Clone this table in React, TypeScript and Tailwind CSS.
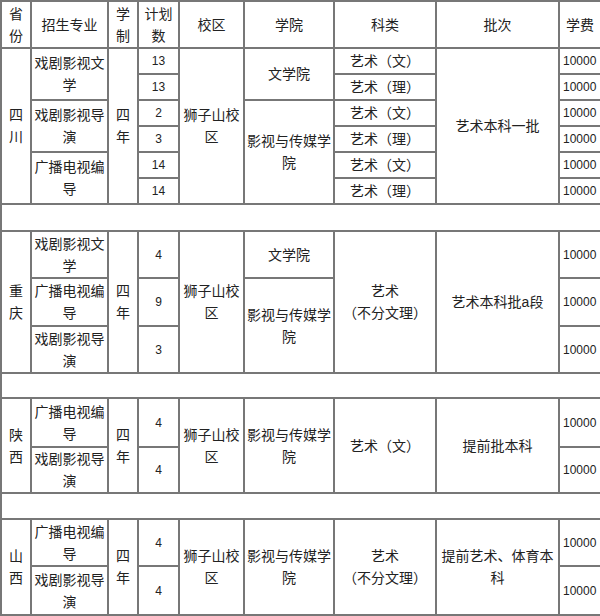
const cell = 'border-2 border-[#777] p-0 text-center align-middle whitespace-nowrap'
const num = `${cell} text-[12px]`
const fee = `${cell} text-[12px] text-left pl-[3px]`

function Blank({ h }: { h: string }) {
  return (
    <tr className={h}>
      <td colSpan={9} className={cell}></td>
    </tr>
  )
}

export default function App() {
  return (
    <div className="w-[600px] h-[616px] bg-white overflow-hidden">
      <table className="w-[600px] table-fixed border-collapse font-['Liberation_Sans','Noto_Sans_CJK_SC',sans-serif] text-[14px] leading-[22px] text-[#222]">
        <colgroup>
          <col className="w-[30px]" />
          <col className="w-[77px]" />
          <col className="w-[30px]" />
          <col className="w-[41px]" />
          <col className="w-[65px]" />
          <col className="w-[90px]" />
          <col className="w-[102px]" />
          <col className="w-[123px]" />
          <col className="w-[42px]" />
        </colgroup>
        <tbody>
          <tr className="h-[47px]">
            <td className={cell}>省<br />份</td>
            <td className={cell}>招生专业</td>
            <td className={cell}>学<br />制</td>
            <td className={cell}>计划<br />数</td>
            <td className={cell}>校区</td>
            <td className={cell}>学院</td>
            <td className={cell}>科类</td>
            <td className={cell}>批次</td>
            <td className={cell}>学费</td>
          </tr>

          {/* 四川 */}
          <tr className="h-[26px]">
            <td rowSpan={6} className={cell}>四<br />川</td>
            <td rowSpan={2} className={cell}>戏剧影视文<br />学</td>
            <td rowSpan={6} className={cell}>四<br />年</td>
            <td className={num}>13</td>
            <td rowSpan={6} className={cell}>狮子山校<br />区</td>
            <td rowSpan={2} className={cell}>文学院</td>
            <td className={cell}>艺术（文）</td>
            <td rowSpan={6} className={cell}>艺术本科一批</td>
            <td className={fee}>10000</td>
          </tr>
          <tr className="h-[26px]">
            <td className={num}>13</td>
            <td className={cell}>艺术（理）</td>
            <td className={fee}>10000</td>
          </tr>
          <tr className="h-[26px]">
            <td rowSpan={2} className={cell}>戏剧影视导<br />演</td>
            <td className={num}>2</td>
            <td rowSpan={4} className={cell}>影视与传媒学<br />院</td>
            <td className={cell}>艺术（文）</td>
            <td className={fee}>10000</td>
          </tr>
          <tr className="h-[26px]">
            <td className={num}>3</td>
            <td className={cell}>艺术（理）</td>
            <td className={fee}>10000</td>
          </tr>
          <tr className="h-[26px]">
            <td rowSpan={2} className={cell}>广播电视编<br />导</td>
            <td className={num}>14</td>
            <td className={cell}>艺术（文）</td>
            <td className={fee}>10000</td>
          </tr>
          <tr className="h-[26px]">
            <td className={num}>14</td>
            <td className={cell}>艺术（理）</td>
            <td className={fee}>10000</td>
          </tr>

          <Blank h="h-[27px]" />

          {/* 重庆 */}
          <tr className="h-[47px]">
            <td rowSpan={3} className={cell}>重<br />庆</td>
            <td className={cell}>戏剧影视文<br />学</td>
            <td rowSpan={3} className={cell}>四<br />年</td>
            <td className={num}>4</td>
            <td rowSpan={3} className={cell}>狮子山校<br />区</td>
            <td className={cell}>文学院</td>
            <td rowSpan={3} className={cell}>艺术<br />（不分文理）</td>
            <td rowSpan={3} className={cell}>艺术本科批a段</td>
            <td className={fee}>10000</td>
          </tr>
          <tr className="h-[48px]">
            <td className={cell}>广播电视编<br />导</td>
            <td className={num}>9</td>
            <td rowSpan={2} className={cell}>影视与传媒学<br />院</td>
            <td className={fee}>10000</td>
          </tr>
          <tr className="h-[47px]">
            <td className={cell}>戏剧影视导<br />演</td>
            <td className={num}>3</td>
            <td className={fee}>10000</td>
          </tr>

          <Blank h="h-[25px]" />

          {/* 陕西 */}
          <tr className="h-[49px]">
            <td rowSpan={2} className={cell}>陕<br />西</td>
            <td className={cell}>广播电视编<br />导</td>
            <td rowSpan={2} className={cell}>四<br />年</td>
            <td className={num}>4</td>
            <td rowSpan={2} className={cell}>狮子山校<br />区</td>
            <td rowSpan={2} className={cell}>影视与传媒学<br />院</td>
            <td rowSpan={2} className={cell}>艺术（文）</td>
            <td rowSpan={2} className={cell}>提前批本科</td>
            <td className={fee}>10000</td>
          </tr>
          <tr className="h-[46px]">
            <td className={cell}>戏剧影视导<br />演</td>
            <td className={num}>4</td>
            <td className={fee}>10000</td>
          </tr>

          <Blank h="h-[26px]" />

          {/* 山西 */}
          <tr className="h-[47px]">
            <td rowSpan={2} className={cell}>山<br />西</td>
            <td className={cell}>广播电视编<br />导</td>
            <td rowSpan={2} className={cell}>四<br />年</td>
            <td className={num}>4</td>
            <td rowSpan={2} className={cell}>狮子山校<br />区</td>
            <td rowSpan={2} className={cell}>影视与传媒学<br />院</td>
            <td rowSpan={2} className={cell}>艺术<br />（不分文理）</td>
            <td rowSpan={2} className={cell}>提前艺术、体育本<br />科</td>
            <td className={fee}>10000</td>
          </tr>
          <tr className="h-[49px]">
            <td className={cell}>戏剧影视导<br />演</td>
            <td className={num}>4</td>
            <td className={fee}>10000</td>
          </tr>
        </tbody>
      </table>
    </div>
  )
}
